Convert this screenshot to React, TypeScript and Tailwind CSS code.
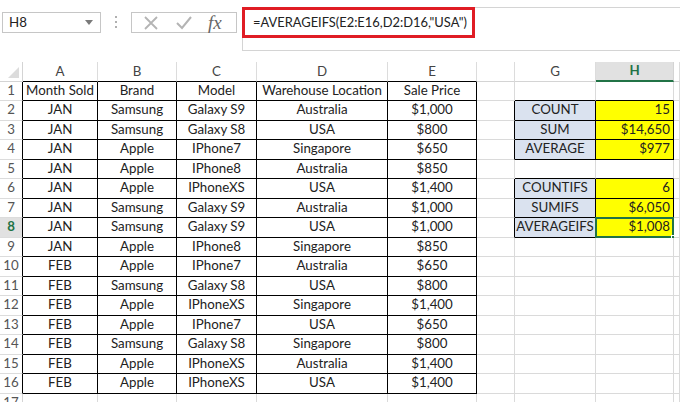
import { type ReactNode } from "react";

const colWidths = "23px 75px 79px 80px 131px 89px 38px 81px 78px 1fr";
const letters = ["", "A", "B", "C", "D", "E", "", "G", "H", ""];

const sales: string[][] = [
	["Month Sold", "Brand", "Model", "Warehouse Location", "Sale Price"],
	["JAN", "Samsung", "Galaxy S9", "Australia", "$1,000"],
	["JAN", "Samsung", "Galaxy S8", "USA", "$800"],
	["JAN", "Apple", "IPhone7", "Singapore", "$650"],
	["JAN", "Apple", "IPhone8", "Australia", "$850"],
	["JAN", "Apple", "IPhoneXS", "USA", "$1,400"],
	["JAN", "Samsung", "Galaxy S9", "Australia", "$1,000"],
	["JAN", "Samsung", "Galaxy S9", "USA", "$1,000"],
	["JAN", "Apple", "IPhone8", "Singapore", "$850"],
	["FEB", "Apple", "IPhone7", "Australia", "$650"],
	["FEB", "Samsung", "Galaxy S8", "USA", "$800"],
	["FEB", "Apple", "IPhoneXS", "Singapore", "$1,400"],
	["FEB", "Apple", "IPhone7", "USA", "$650"],
	["FEB", "Samsung", "Galaxy S8", "Singapore", "$800"],
	["FEB", "Apple", "IPhoneXS", "Australia", "$1,400"],
	["FEB", "Apple", "IPhoneXS", "USA", "$1,400"],
];

// summary block in G:H, keyed by row number
const summary: Record<number, [string, string]> = {
	2: ["COUNT", "15"],
	3: ["SUM", "$14,650"],
	4: ["AVERAGE", "$977"],
	6: ["COUNTIFS", "6"],
	7: ["SUMIFS", "$6,050"],
	8: ["AVERAGEIFS", "$1,008"],
};

const inTable = (r: number, c: number) => r >= 1 && r <= 16 && c >= 1 && c <= 5;
const inSummary = (r: number, c: number) => !!summary[r] && (c === 7 || c === 8);
const boxed = (r: number, c: number) => inTable(r, c) || inSummary(r, c);

function Cell({ r, c }: { r: number; c: number }) {
	const right = boxed(r, c) || boxed(r, c + 1) ? "border-r-black" : "border-r-[#dadada]";
	const bottom = boxed(r, c) || boxed(r + 1, c) ? "border-b-black" : "border-b-[#dadada]";

	let content: ReactNode = null;
	let align = "justify-center";
	let fill = "bg-white";

	if (inTable(r, c)) {
		content = sales[r - 1][c - 1];
	} else if (inSummary(r, c)) {
		if (c === 7) {
			content = summary[r][0];
			fill = "bg-[#dae2ef]";
		} else {
			content = summary[r][1];
			fill = "bg-[#ffff00]";
			align = "justify-end pr-[3px]";
		}
	}

	const selected = r === 8 && c === 8;

	return (
		<div
			className={`relative flex items-center border-r border-b ${right} ${bottom} ${fill} ${align} whitespace-nowrap text-[#222]`}
		>
			{content}
			{selected && (
				<>
					<div className="absolute -left-[1px] -top-[1px] -right-[1px] -bottom-[1px] border-2 border-[#217346]" />
					<div className="absolute -right-[4px] -bottom-[4px] h-[6px] w-[6px] bg-[#217346] border border-white" />
				</>
			)}
		</div>
	);
}

function FormulaBar() {
	return (
		<div className="flex h-[62px] items-start text-[#222]">
			{/* name box */}
			<div className="ml-[2px] mt-[12px] flex h-[21px] w-[99px] items-center justify-between border border-[#c6c6c6] pl-[6px] pr-[7px]">
				<span>H8</span>
				<svg width="8" height="5" viewBox="0 0 8 5">
					<polygon points="0,0 8,0 4,5" fill="#7a7a7a" />
				</svg>
			</div>
			<div className="mx-[14px] mt-[16px] flex flex-col gap-[3px]">
				<div className="h-[2px] w-[2px] bg-[#b0b0b0]" />
				<div className="h-[2px] w-[2px] bg-[#b0b0b0]" />
				<div className="h-[2px] w-[2px] bg-[#b0b0b0]" />
			</div>
			{/* cancel / enter / fx */}
			<div className="mt-[12px] flex h-[21px] w-[106px] items-center border border-[#c6c6c6] pl-[11px]">
				<svg width="16" height="16" viewBox="0 0 16 16" className="mr-[16px]">
					<path d="M2 2 L14 14 M14 2 L2 14" stroke="#b4b4b4" strokeWidth="1.8" />
				</svg>
				<svg width="18" height="16" viewBox="0 0 18 16" className="mr-[15px]">
					<path d="M2 8 L7 13 L16 2" stroke="#b4b4b4" strokeWidth="2" fill="none" />
				</svg>
				<span className="font-['Liberation_Serif',serif] text-[19px] italic leading-none text-[#666]">fx</span>
			</div>
			{/* formula input */}
			<div className="ml-[5px] mt-[7px] flex h-[44px] flex-1 items-start border-y border-l border-[#d4d4d4]">
				<div className="-ml-[1px] -mt-[1px] flex h-[31px] items-center border-[3px] border-[#e01c24] pl-[8px] pr-[5px] text-[12.9px] whitespace-nowrap">
					=AVERAGEIFS(E2:E16,D2:D16,"USA")
				</div>
			</div>
		</div>
	);
}

export default function App() {
	const rows = Array.from({ length: 17 }, (_, i) => i + 1);

	return (
		<div className="h-[402px] w-[680px] overflow-hidden bg-white font-['Lato','Liberation_Sans',sans-serif] text-[13.3px]">
			<FormulaBar />
			<div className="grid" style={{ gridTemplateColumns: colWidths, gridAutoRows: "19.5px" }}>
				{/* column headers */}
				{letters.map((l, c) => {
					const bottom = boxed(1, c) ? "border-b-black" : "border-b-[#d4d4d4]";
					if (c === 0) {
						return (
							<div key="corner" className={`flex h-[20px] items-end justify-end border-r border-b border-r-[#d4d4d4] ${bottom} pb-[3px] pr-[3px]`}>
								<svg width="11" height="11" viewBox="0 0 11 11">
									<polygon points="11,0 11,11 0,11" fill="#dcdcdc" />
								</svg>
							</div>
						);
					}
					if (l === "H") {
						return (
							<div key={c} className="flex h-[20px] items-center justify-center border-r border-r-[#d4d4d4] border-b-2 border-b-[#217346] bg-[#e1e1e1] font-bold text-[#217346]">
								{l}
							</div>
						);
					}
					return (
						<div key={c} className={`flex h-[20px] items-center justify-center border-r border-b border-r-[#dcdcdc] ${bottom} text-[#444]`}>
							{l}
						</div>
					);
				})}

				{rows.map((r) => (
					<div key={r} className="contents">
						<div
							className={`flex items-center justify-center border-r border-b border-b-[#dcdcdc] ${
								r <= 16 ? "border-r-black" : "border-r-[#d4d4d4]"
							} ${r === 8 ? "bg-[#e1e1e1] font-bold text-[#217346]" : "text-[#555]"}`}
						>
							{r}
						</div>
						{[1, 2, 3, 4, 5, 6, 7, 8, 9].map((c) => (
							<Cell key={c} r={r} c={c} />
						))}
					</div>
				))}
			</div>
		</div>
	);
}
